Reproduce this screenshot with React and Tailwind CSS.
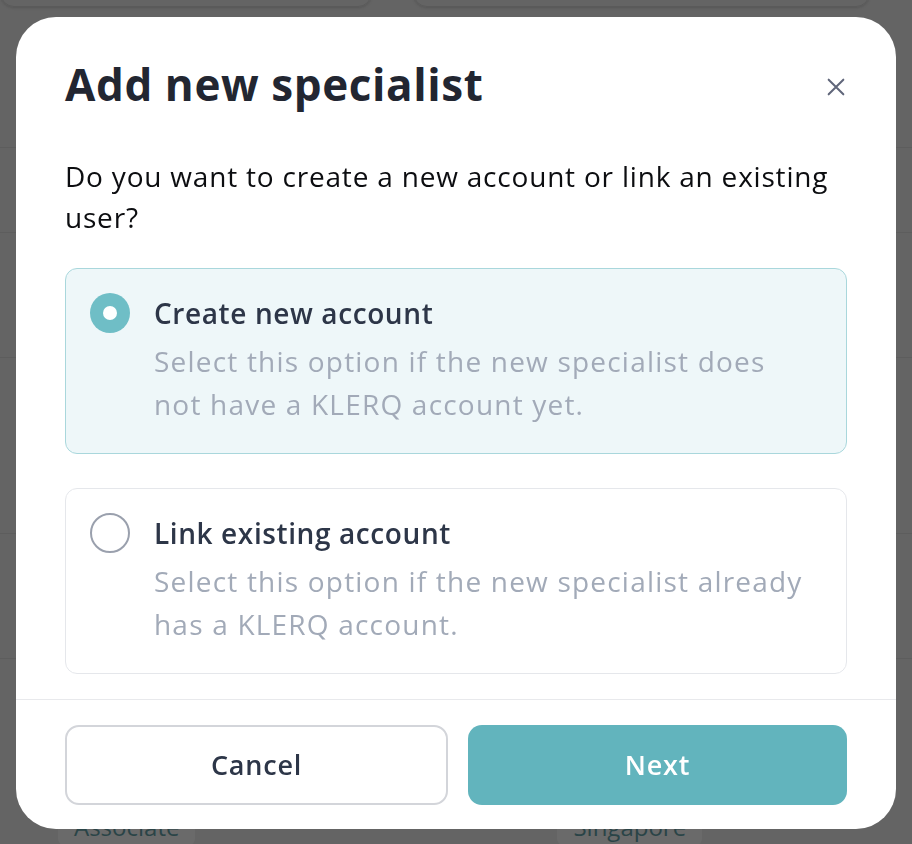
import React, { useState } from "react";

const options = [
  {
    id: "create",
    title: "Create new account",
    desc: "Select this option if the new specialist does not have a KLERQ account yet.",
  },
  {
    id: "link",
    title: "Link existing account",
    desc: "Select this option if the new specialist already has a KLERQ account.",
  },
];

const font = { fontFamily: "'Open Sans', 'Noto Sans', sans-serif" };

const BackgroundPage = () => (
  <div className="h-[844px] w-full overflow-hidden bg-[#646464]">
    <div className="flex gap-[41px] -mt-[40px]">
      <div className="h-[47px] w-[372px] rounded-b-[14px] border border-[#5a5a5a] shadow-sm" />
      <div className="h-[47px] w-[457px] rounded-b-[14px] border border-[#5a5a5a] shadow-sm" />
    </div>
    <div className="mt-[140px] border-b border-[#5d5d5d]" />
    <div className="mt-[84px] border-b border-[#5d5d5d]" />
    <div className="mt-[124px] border-b border-[#5d5d5d]" />
    <div className="mt-[175px] border-b border-[#5d5d5d]" />
    <div className="mt-[124px] border-b border-[#5d5d5d]" />
    <div className="mt-[150px] flex gap-[362px] pl-[58px]">
      <span className="rounded-md bg-[#6a6a6a] px-[16px] text-[24px] leading-[36px] text-[#2a4447]" style={font}>
        Associate
      </span>
      <span className="rounded-md bg-[#6a6a6a] px-[16px] text-[24px] leading-[36px] text-[#2a4447]" style={font}>
        Singapore
      </span>
    </div>
  </div>
);

const Radio = ({ checked }) =>
  checked ? (
    <span className="flex h-[40px] w-[40px] shrink-0 items-center justify-center rounded-full bg-[#6fbec6]">
      <span className="h-[14px] w-[14px] rounded-full bg-white" />
    </span>
  ) : (
    <span className="h-[40px] w-[40px] shrink-0 rounded-full border-2 border-[#9aa0ad] bg-white" />
  );

const App = () => {
  const [selected, setSelected] = useState("create");

  return (
    <div className="relative" style={font}>
      <BackgroundPage />

      <div className="fixed inset-0 flex items-start justify-center pt-[17px]">
        <div className="flex h-[812px] w-[880px] flex-col rounded-[40px] bg-white">
          <div className="px-[49px] pt-[43px]">
            <div className="flex items-center justify-between">
              <h2 className="text-[44px] font-bold leading-[48px] tracking-[0.6px] text-[#222631]">
                Add new specialist
              </h2>
              <button className="mt-[6px] text-[#60667a]">
                <svg width="22" height="22" viewBox="0 0 24 24" fill="none" stroke="currentColor" strokeWidth="2.2" strokeLinecap="round">
                  <path d="M4 4l16 16M20 4L4 20" />
                </svg>
              </button>
            </div>

            <p className="mt-[48px] text-[28px] leading-[41px] tracking-[0.8px] text-[#0c0d10]">
              Do you want to create a new account or link an existing user?
            </p>

            <div className="mt-[30px] flex flex-col gap-[34px]">
              {options.map((o) => {
                const active = selected === o.id;
                return (
                  <div
                    key={o.id}
                    onClick={() => setSelected(o.id)}
                    className={
                      active
                        ? "flex cursor-pointer gap-[24px] rounded-[12px] border border-[#a9d7dc] bg-[#eef7f9] pl-[24px] pr-[16px] pt-[24px] pb-[27px]"
                        : "flex cursor-pointer gap-[24px] rounded-[12px] border border-[#e5e7eb] bg-white pl-[24px] pr-[16px] pt-[24px] pb-[27px]"
                    }
                  >
                    <Radio checked={active} />
                    <div>
                      <div className="text-[28px] font-semibold leading-[40px] tracking-[0.6px] text-[#2d3648]">
                        {o.title}
                      </div>
                      <div className="mt-[7px] max-w-[664px] text-[28px] leading-[43px] tracking-[1.2px] text-[#a2aab8]">
                        {o.desc}
                      </div>
                    </div>
                  </div>
                );
              })}
            </div>
          </div>

          <div className="mt-auto border-t border-[#e8e9ec] px-[49px] pt-[25px] pb-[24px]">
            <div className="flex gap-[20px]">
              <button className="h-[80px] flex-1 rounded-[14px] border-2 border-[#d3d5da] bg-white text-[27px] font-semibold tracking-[0.8px] text-[#2d3648]">
                Cancel
              </button>
              <button className="h-[80px] flex-1 rounded-[14px] bg-[#62b4bd] text-[27px] font-semibold tracking-[0.8px] text-white">
                Next
              </button>
            </div>
          </div>
        </div>
      </div>
    </div>
  );
};

export default App;
